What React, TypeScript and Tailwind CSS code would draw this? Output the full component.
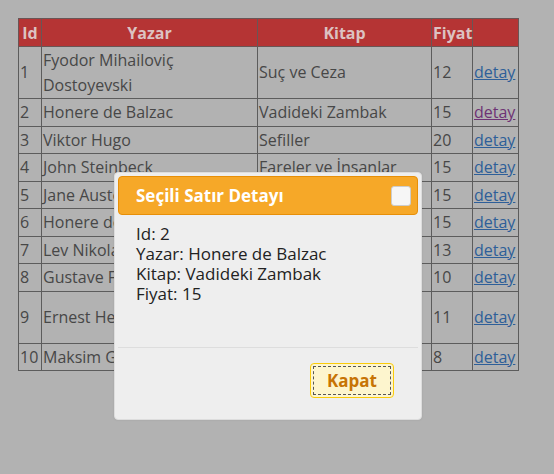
import React from 'react';

const rows = [
  { id: 1, yazar: 'Fyodor Mihailoviç Dostoyevski', kitap: 'Suç ve Ceza', fiyat: 12 },
  { id: 2, yazar: 'Honere de Balzac', kitap: 'Vadideki Zambak', fiyat: 15, visited: true },
  { id: 3, yazar: 'Viktor Hugo', kitap: 'Sefiller', fiyat: 20 },
  { id: 4, yazar: 'John Steinbeck', kitap: 'Fareler ve İnsanlar', fiyat: 15 },
  { id: 5, yazar: 'Jane Austen', kitap: 'Aşk ve Gurur', fiyat: 15 },
  { id: 6, yazar: 'Honere de Balzac', kitap: 'Goriot Baba', fiyat: 15 },
  { id: 7, yazar: 'Lev Nikolayeviç Tolstoy', kitap: 'Diriliş', fiyat: 13 },
  { id: 8, yazar: 'Gustave Flaubert', kitap: 'Madam Bovary', fiyat: 10 },
  { id: 9, yazar: 'Ernest Hemingway', kitap: 'Çanlar Kimin İçin Çalıyor', fiyat: 11 },
  { id: 10, yazar: 'Maksim Gorki', kitap: 'Ana', fiyat: 8 },
];

const font = "font-['Trebuchet_MS','Open_Sans',sans-serif]";
const cell = 'border border-[#5c5c5c] px-[1px] py-[1px] align-middle';

export default function App() {
  return (
    <div className={`relative w-[554px] h-[474px] bg-[#b2b2b2] p-[18px] ${font}`}>
      <table className="table-fixed border-collapse w-[500px] text-[16px] text-[#474747]">
        <colgroup>
          <col className="w-[23px]" />
          <col className="w-[216px]" />
          <col className="w-[174px]" />
          <col className="w-[41px]" />
          <col className="w-[46px]" />
        </colgroup>
        <thead>
          <tr className="bg-[#b53434] text-[#dcc2c2] font-bold h-[28px]">
            <th className="border border-[#6a5555] px-[1px]">Id</th>
            <th className="border border-[#6a5555] px-[1px]">Yazar</th>
            <th className="border border-[#6a5555] px-[1px]">Kitap</th>
            <th className="border border-[#6a5555] px-[1px] text-left">Fiyat</th>
            <th className="border border-[#6a5555] px-[1px]"></th>
          </tr>
        </thead>
        <tbody className="leading-[24.5px]">
          {rows.map((r) => (
            <tr key={r.id}>
              <td className={cell}>{r.id}</td>
              <td className={cell}>{r.yazar}</td>
              <td className={cell}>{r.kitap}</td>
              <td className={cell}>{r.fiyat}</td>
              <td className={cell}>
                <a className={r.visited ? 'underline text-[#6e3275]' : 'underline text-[#2e5f99]'}>detay</a>
              </td>
            </tr>
          ))}
        </tbody>
      </table>

      {/* dialog */}
      <div className="absolute left-[114px] top-[172px] w-[308px] h-[248px] bg-[#eeeeee] border border-[#dddddd] rounded-[4px] p-[3px] flex flex-col shadow-[0_0_2px_rgba(0,0,0,0.1)]">
        <div className="h-[39px] bg-[#f6a828] border border-[#e78f08] rounded-[4px] flex items-center justify-between pl-[17px] pr-[6px]">
          <span className="text-white font-bold text-[17px]">Seçili Satır Detayı</span>
          <span className="w-[20px] h-[20px] bg-[#f6f6f6] border border-[#cccccc] rounded-[3px]" />
        </div>
        <div className="flex-1 px-[18px] pt-[9px] text-[17px] leading-[20px] text-[#222222]">
          <div>Id: 2</div>
          <div>Yazar: Honere de Balzac</div>
          <div>Kitap: Vadideki Zambak</div>
          <div>Fiyat: 15</div>
        </div>
        <div className="h-[69px] border-t border-[#dddddd] flex justify-end items-start pt-[15px] pr-[24px]">
          <button className="w-[84px] h-[35px] bg-[#fdf5ce] border border-[#fbcb09] rounded-[4px] p-[2px]">
            <span className="flex items-center justify-center w-full h-full border border-dashed border-[#555555] text-[#c77405] font-bold text-[17px]">
              Kapat
            </span>
          </button>
        </div>
      </div>
    </div>
  );
}
